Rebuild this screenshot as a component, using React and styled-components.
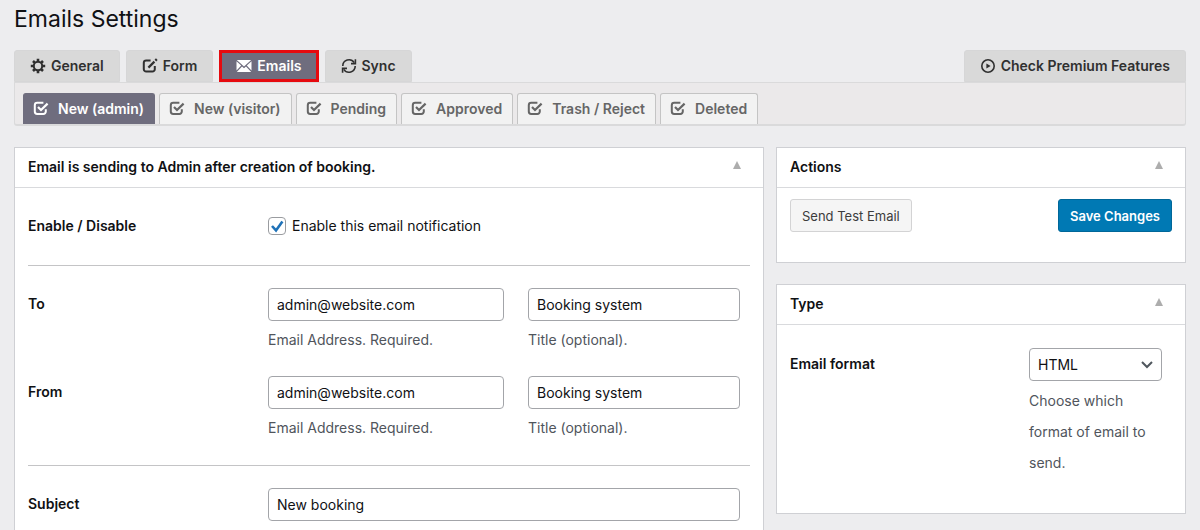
import styled, { createGlobalStyle } from "styled-components";

const GlobalStyle = createGlobalStyle`
  * {
    box-sizing: border-box;
  }
  body {
    margin: 0;
    background: #ededef;
    color: #101114;
    font: 400 14px/20px Inter, "Liberation Sans", sans-serif;
  }
  input, select, button {
    font: inherit;
    color: inherit;
  }
`;

const svgProps = { viewBox: "0 0 16 16", width: 16, height: 16, "aria-hidden": true };

const GearIcon = () => (
  <svg {...svgProps} fill="none" stroke="currentColor">
    <circle cx="8" cy="8" r="4.2" strokeWidth="2" />
    <g strokeWidth="2.6">
      <path d="M8 4V.8M8 15.2V12M4 8H.8M15.2 8H12" />
      <path d="M5.2 5.2 3 3M13 13l-2.2-2.2M5.2 10.8 3 13M13 3l-2.2 2.2" />
    </g>
  </svg>
);

const EditIcon = () => (
  <svg {...svgProps} fill="none" stroke="currentColor" strokeWidth="2">
    <path d="M8.6 2.4H4.2A2.4 2.4 0 0 0 1.8 4.8v6.4a2.4 2.4 0 0 0 2.4 2.4h6.2a2.4 2.4 0 0 0 2.4-2.4V8" />
    <path d="M6.4 9.6 12.4 3.6" strokeWidth="2.2" />
    <path d="m13.4 2.6 1.4-1.4" strokeWidth="2.4" />
  </svg>
);

const MailIcon = () => (
  <svg {...svgProps} fill="currentColor">
    <path d="M.8 2h14.4L8 8.4z" />
    <path d="M.5 3.2 5.2 7.6.5 12.6z" />
    <path d="M15.5 3.2 10.8 7.6l4.7 5z" />
    <path d="M.8 14 6 8.6l2 1.7 2-1.7 5.2 5.4z" />
  </svg>
);

const SyncIcon = () => (
  <svg {...svgProps} fill="none" stroke="currentColor" strokeWidth="1.6">
    <path d="M1.8 8a6.2 6.2 0 0 1 11.4-3.4" />
    <path d="M14.4 1.2v4.4H10" />
    <path d="M14.2 8a6.2 6.2 0 0 1-11.4 3.4" />
    <path d="M1.6 14.8v-4.4H6" />
  </svg>
);

const CheckIcon = () => (
  <svg {...svgProps} fill="none" stroke="currentColor" strokeWidth="2">
    <path d="M10.4 1.8H4.2a2.4 2.4 0 0 0-2.4 2.4v6.4A2.4 2.4 0 0 0 4.2 13h6.2a2.4 2.4 0 0 0 2.4-2.4V8.2" />
    <path d="m5 6 3 3 6.6-6.4" strokeWidth="2.2" />
  </svg>
);

const PlayIcon = () => (
  <svg {...svgProps} fill="none" stroke="currentColor" strokeWidth="1.6">
    <circle cx="8" cy="8" r="6.2" />
    <path d="M6.4 5.4v5.2L10.6 8z" fill="currentColor" stroke="none" />
  </svg>
);

const tabs = [
  { label: "General", icon: <GearIcon /> },
  { label: "Form", icon: <EditIcon /> },
  { label: "Emails", icon: <MailIcon />, active: true },
  { label: "Sync", icon: <SyncIcon /> },
];

const emailTabs = [
  "New (admin)",
  "New (visitor)",
  "Pending",
  "Approved",
  "Trash / Reject",
  "Deleted",
];

const Panel = ({ title, open, children }) => (
  <PanelBox $open={open}>
    <PanelHeader>
      <h2>{title}</h2>
      <Toggle type="button" aria-label={`Toggle ${title}`}>
        <svg viewBox="0 0 8 8" width="8" height="8" aria-hidden="true">
          <path d="M4 0l4 8H0z" fill="currentColor" />
        </svg>
      </Toggle>
    </PanelHeader>
    {children}
  </PanelBox>
);

const AddressRow = ({ id, label }) => (
  <Row>
    <RowLabel htmlFor={`${id}-email`}>{label}</RowLabel>
    <AddressFields>
      <div>
        <TextInput id={`${id}-email`} type="email" defaultValue="admin@website.com" />
        <Help>Email Address. Required.</Help>
      </div>
      <div>
        <TextInput
          type="text"
          aria-label={`${label} title`}
          defaultValue="Booking system"
        />
        <Help>Title (optional).</Help>
      </div>
    </AddressFields>
  </Row>
);

const App = () => {
  return (
    <Page>
      <GlobalStyle />
      <Title>Emails Settings</Title>
      <Tabs>
        {tabs.map((tab) => (
          <Tab href="#" key={tab.label} $active={tab.active}>
            {tab.icon}
            {tab.label}
          </Tab>
        ))}
        <PremiumTab href="#">
          <PlayIcon />
          Check Premium Features
        </PremiumTab>
      </Tabs>
      <SubTabs>
        {emailTabs.map((label, i) => (
          <SubTab href="#" key={label} $active={i === 0}>
            <CheckIcon />
            {label}
          </SubTab>
        ))}
      </SubTabs>

      <Columns>
        <Panel title="Email is sending to Admin after creation of booking." open>
          <Section>
            <Row>
              <RowLabel htmlFor="enabled">Enable / Disable</RowLabel>
              <CheckLabel>
                <Checkbox id="enabled" type="checkbox" defaultChecked />
                Enable this email notification
              </CheckLabel>
            </Row>
          </Section>
          <Section>
            <AddressRow id="to" label="To" />
            <AddressRow id="from" label="From" />
          </Section>
          <Section>
            <Row>
              <RowLabel htmlFor="subject">Subject</RowLabel>
              <TextInput id="subject" type="text" defaultValue="New booking" />
            </Row>
          </Section>
        </Panel>

        <Sidebar>
          <Panel title="Actions">
            <Actions>
              <Button type="button">Send Test Email</Button>
              <Button type="submit" $primary>
                Save Changes
              </Button>
            </Actions>
          </Panel>
          <Panel title="Type">
            <FormatRow>
              <RowLabel htmlFor="format">Email format</RowLabel>
              <div>
                <SelectWrap>
                  <Select id="format" defaultValue="HTML">
                    <option>HTML</option>
                  </Select>
                  <svg viewBox="0 0 12 8" width="12" height="8" aria-hidden="true">
                    <path d="M1 1l5 5 5-5" fill="none" stroke="#50575e" strokeWidth="2" />
                  </svg>
                </SelectWrap>
                <FormatHelp>Choose which format of email to send.</FormatHelp>
              </div>
            </FormatRow>
          </Panel>
        </Sidebar>
      </Columns>
    </Page>
  );
};

const Page = styled.div`
  display: flex;
  flex-direction: column;
  min-height: 100vh;
  padding: 4px 14px 0;
`;

const Title = styled.h1`
  margin: 0 0 16px;
  font-size: 23px;
  font-weight: 400;
  line-height: 30px;
`;

const Tabs = styled.nav`
  display: flex;
  gap: 6px;
`;

const Tab = styled.a`
  display: flex;
  align-items: center;
  gap: 5px;
  height: 32px;
  padding: 0 ${(props) => (props.$active ? "14px" : "15px")};
  border: ${(props) => (props.$active ? "3px solid #e60a0f" : "1px solid #d6d6d7")};
  border-radius: ${(props) => (props.$active ? "0" : "3px 3px 0 0")};
  background: ${(props) => (props.$active ? "#6f6d7e" : "#d9d9d9")};
  color: ${(props) => (props.$active ? "#fff" : "#303030")};
  font-weight: 600;
  text-decoration: none;
  white-space: nowrap;
`;

const PremiumTab = styled(Tab)`
  margin-left: auto;
`;

const SubTabs = styled.nav`
  display: flex;
  gap: 4px;
  padding: 10px 8px 0;
  border: 1px solid #dadadb;
  border-bottom-width: 2px;
  border-radius: 0 0 3px 3px;
  background: #ebe9ea;
`;

const SubTab = styled.a`
  display: flex;
  align-items: center;
  gap: 9px;
  height: 31px;
  padding: 0 10px 0 9px;
  border: 1px solid ${(props) => (props.$active ? "#6f6d7e" : "#c4c4c4")};
  border-bottom: 0;
  border-radius: 3px 3px 0 0;
  background: ${(props) => (props.$active ? "#6f6d7e" : "#f2f2f2")};
  color: ${(props) => (props.$active ? "#fff" : "#666")};
  font-weight: 600;
  text-decoration: none;
  white-space: nowrap;
`;

const Columns = styled.main`
  display: grid;
  grid-template-columns: 75fr 41fr;
  flex: 1;
  gap: 12px;
  margin-top: 21px;
`;

const Sidebar = styled.aside`
  display: flex;
  flex-direction: column;
  gap: 21px;
`;

const PanelBox = styled.section`
  border: 1px solid #cfd0d4;
  border-bottom-width: ${(props) => (props.$open ? "0" : "1px")};
  background: #fff;
`;

const PanelHeader = styled.header`
  display: flex;
  justify-content: space-between;
  padding: 9px 20px 10px 13px;
  border-bottom: 1px solid #d9dadd;
  h2 {
    margin: 0;
    font-size: 14px;
    font-weight: 600;
    line-height: 20px;
  }
`;

const Toggle = styled.button`
  display: flex;
  padding: 4px 2px;
  border: 0;
  background: none;
  color: #adadad;
`;

const Section = styled.div`
  display: grid;
  gap: 22px;
  margin: 0 13px;
  padding: 22px 0 23px;
  & + & {
    border-top: 1px solid #c4c4c6;
  }
`;

const Row = styled.div`
  display: grid;
  grid-template-columns: 240px 1fr;
  padding-right: 10px;
`;

const RowLabel = styled.label`
  padding-top: 6px;
  font-weight: 600;
`;

const AddressFields = styled.div`
  display: grid;
  grid-template-columns: 236fr 212fr;
  gap: 24px;
`;

const TextInput = styled.input`
  display: block;
  width: 100%;
  height: 33px;
  padding: 0 8px;
  border: 1px solid #a3a5a9;
  border-radius: 4px;
  background: #fff;
`;

const Help = styled.p`
  margin: 9px 0 4px;
  color: #50555c;
`;

const CheckLabel = styled.label`
  display: flex;
  align-items: center;
  gap: 6px;
  height: 32px;
`;

const Checkbox = styled.input`
  appearance: none;
  width: 18px;
  height: 18px;
  margin: 0;
  border: 1px solid #9a9ca0;
  border-radius: 4px;
  background: #fff;
  &:checked {
    background: url("data:image/svg+xml,%3Csvg xmlns='http://www.w3.org/2000/svg' viewBox='0 0 16 16'%3E%3Cpath d='M3 8l4 4.4L13.4 3.4' fill='none' stroke='%231f72b8' stroke-width='2.6'/%3E%3C/svg%3E");
  }
`;

const Actions = styled.div`
  display: flex;
  justify-content: space-between;
  padding: 11px 13px 30px;
`;

const Button = styled.button`
  height: 33px;
  padding: 0 11px;
  border: 1px solid ${(props) => (props.$primary ? "#006799" : "#d3d3d4")};
  border-radius: 3px;
  background: ${(props) => (props.$primary ? "#0079b4" : "#f5f5f5")};
  color: ${(props) => (props.$primary ? "#fff" : "#3c3c3c")};
  font-size: 13px;
  font-weight: ${(props) => (props.$primary ? 600 : 400)};
`;

const FormatRow = styled.div`
  display: grid;
  grid-template-columns: 1fr 133px;
  padding: 23px 23px 35px 13px;
`;

const SelectWrap = styled.div`
  display: grid;
  align-items: center;
  svg {
    grid-area: 1 / 1;
    justify-self: end;
    margin-right: 9px;
    pointer-events: none;
  }
`;

const Select = styled.select`
  grid-area: 1 / 1;
  appearance: none;
  width: 100%;
  height: 33px;
  padding: 0 8px;
  border: 1px solid #a3a5a9;
  border-radius: 4px;
  background: #fff;
`;

const FormatHelp = styled.p`
  margin: 4px 0 0;
  color: #50555c;
  line-height: 31px;
`;

export default App;
